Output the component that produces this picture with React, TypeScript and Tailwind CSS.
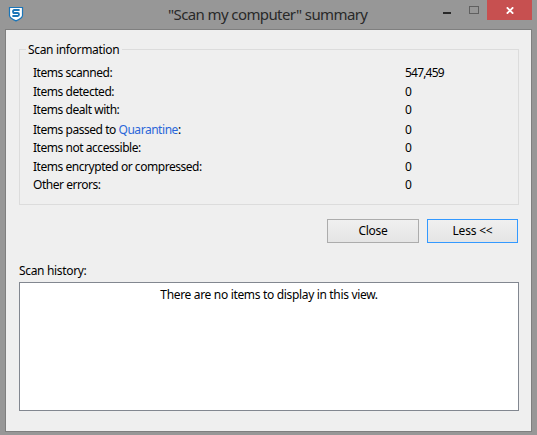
import React from "react";

type Row = { label: React.ReactNode; value: string; height: string };

const rows: Row[] = [
  { label: "Items scanned:", value: "547,459", height: "h-[19px]" },
  { label: "Items detected:", value: "0", height: "h-[18px]" },
  { label: "Items dealt with:", value: "0", height: "h-5" },
  {
    label: (
      <>
        Items passed to <a className="text-[#2a66d9]">Quarantine</a>:
      </>
    ),
    value: "0",
    height: "h-[18px]",
  },
  { label: "Items not accessible:", value: "0", height: "h-[19px]" },
  { label: "Items encrypted or compressed:", value: "0", height: "h-[18px]" },
  { label: "Other errors:", value: "0", height: "h-[18px]" },
];

function ShieldIcon() {
  return (
    <svg width="16" height="16" viewBox="0 0 16 16" className="shrink-0">
      <path d="M1.5 1.5h13v7.9c0 2.2-2.9 3.8-6.5 5.5-3.6-1.7-6.5-3.3-6.5-5.5z" fill="#fff" stroke="#1b75b8" strokeWidth="1.2" />
      <path d="M11.6 4H6.4Q5 4 5 5.6T6.4 7h3.2Q11 7 11 8.5T9.6 10H4.4" fill="none" stroke="#1b75b8" strokeWidth="1.8" />
    </svg>
  );
}

function TitleBar() {
  return (
    <header className="flex h-[29px] items-start">
      <div className="ml-2 mt-[6px] flex w-[160px]">
        <ShieldIcon />
      </div>
      <h1 className="mt-[4px] w-[260px] whitespace-nowrap text-[15px] leading-5 tracking-[-0.6px] text-[#292929]">
        "Scan my computer" summary
      </h1>
      <div className="ml-[15px] mt-3 h-[2px] w-2 bg-[#292929]" />
      <div className="ml-[18px] mt-[6px] h-2 w-[10px] border border-[#606060]" />
      <div className="ml-2 flex h-5 w-[45px] justify-center bg-[#c75050] pt-[7px]">
        <svg width="8" height="7" viewBox="0 0 8 7">
          <path d="M.8.3 7.2 6.7M7.2.3.8 6.7" stroke="#fff" strokeWidth="1.8" />
        </svg>
      </div>
    </header>
  );
}

export default function App() {
  return (
    <div className="flex h-[435px] w-[537px] flex-col overflow-hidden bg-[#979797] font-['Noto_Sans','Open_Sans',sans-serif] text-black">
      <TitleBar />
      <main className="ml-[5px] h-[403px] w-[527px] border border-[#7f7f7f] bg-[#efefef] px-[13px] pt-[12px] text-[12px] leading-4 tracking-[-0.33px]">
        <section className="mt-[7px] h-[156px] w-[500px] border border-[#dcdcdc]">
          <h2 className="-mt-[8px] ml-[6px] w-[96px] whitespace-nowrap bg-[#efefef] pl-[2px]">Scan information</h2>
          <dl className="ml-[13px] mt-[7px]">
            {rows.map((row, i) => (
              <div key={i} className={`flex ${row.height}`}>
                <dt className="w-[372px] tracking-[-0.46px]">{row.label}</dt>
                <dd className="tracking-[-0.8px]">{row.value}</dd>
              </div>
            ))}
          </dl>
        </section>
        <div className="mt-[14px] flex gap-2">
          <button className="ml-[308px] h-6 w-[92px] border border-[#acacac] bg-linear-to-b from-[#f0f0f0] to-[#e5e5e5]">Close</button>
          <button className="h-6 w-[91px] border border-[#3399ff] bg-linear-to-b from-[#f0f0f0] to-[#e5e5e5] tracking-[-0.2px]">Less &lt;&lt;</button>
        </div>
        <h2 className="mt-[20px]">Scan history:</h2>
        <div className="mt-[3px] h-[129px] w-[500px] border border-[#828790] bg-white pt-[4px] text-center">
          There are no items to display in this view.
        </div>
      </main>
    </div>
  );
}
